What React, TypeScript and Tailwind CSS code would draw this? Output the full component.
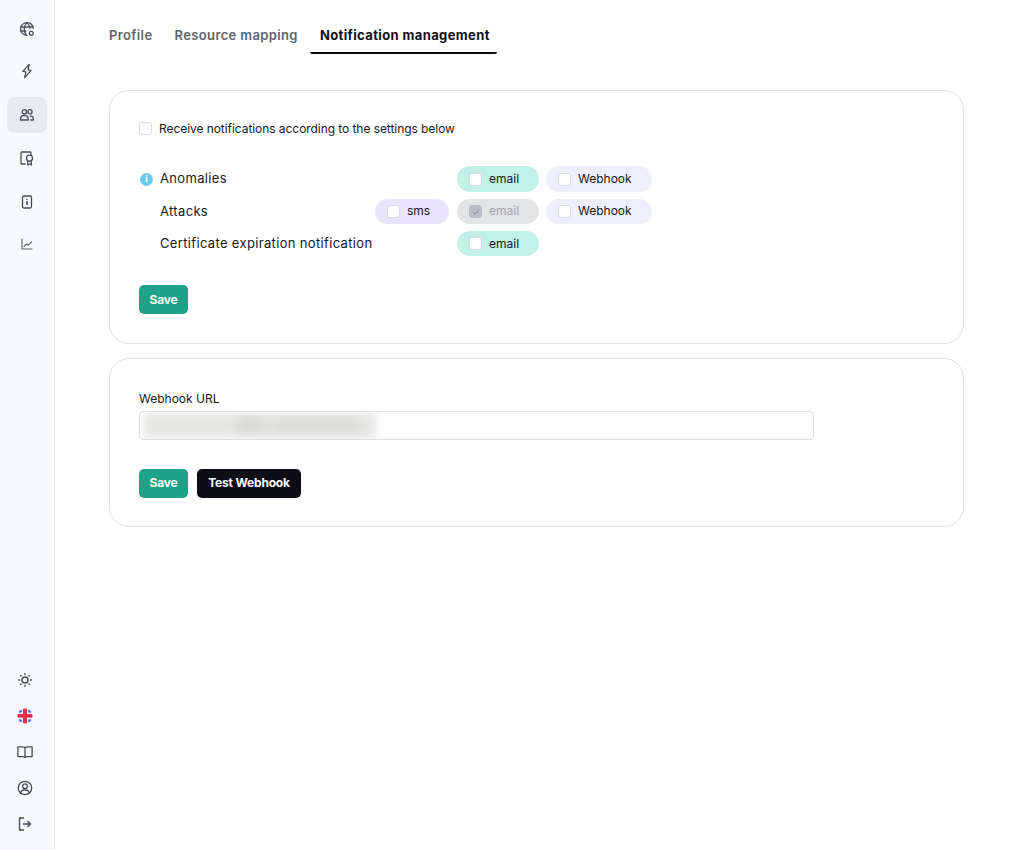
import React from "react";

const S = ({ children, w = 16 }: { children: React.ReactNode; w?: number }) => (
  <svg width={w} height={w} viewBox="0 0 16 16" fill="none" stroke="#454c59" strokeWidth="1.3" strokeLinecap="round" strokeLinejoin="round">
    {children}
  </svg>
);

const GlobeDot = () => (
  <S>
    <path d="M14.3 7.2A6.4 6.4 0 1 0 7.6 14.4" />
    <path d="M1.6 6h12.2M1.7 10h5" />
    <path d="M7.9 1.6C6 3.4 5.2 5.6 5.2 8s.8 4.6 2.4 6.4M8 1.6c1.8 1.8 2.7 3.6 2.9 5.6" />
    <circle cx="12.3" cy="12.2" r="1.9" />
  </S>
);
const Bolt = () => (
  <S>
    <path d="M10.2 1.4 3.9 8.4l3 .5-1.2 5.7 6.4-7.2-3-.5z" />
  </S>
);
const People = () => (
  <S>
    <circle cx="5.4" cy="4.8" r="2.2" />
    <path d="M1.6 13v-1.3c0-1.7 1.4-3 3-3h1.6c1.7 0 3 1.3 3 3V13z" />
    <circle cx="11" cy="4.8" r="2.1" />
    <path d="M11.4 8.8c1.8.2 3 1.4 3 3.1V13h-2.6" />
  </S>
);
const CertIcon = () => (
  <S>
    <path d="M6 14H3a1 1 0 0 1-1-1V3a1 1 0 0 1 1-1h8a1 1 0 0 1 1 1v1.5" />
    <circle cx="10.5" cy="8.2" r="3" />
    <path d="M8.7 10.5V15l1.8-1 1.8 1v-4.5" />
  </S>
);
const InfoCard = () => (
  <S>
    <rect x="3.5" y="2" width="9" height="12" rx="1.5" />
    <path d="M8 5.5v.1M8 7.6v3" strokeWidth="1.5" />
  </S>
);
const Chart = () => (
  <svg width="12" height="12" viewBox="0 0 12 12" fill="none" stroke="#5b6270" strokeWidth="1.1" strokeLinecap="round" strokeLinejoin="round">
    <path d="M1 1v10h10" />
    <path d="M3 8.5 5.6 6l1.5 1.2L10.5 4" />
  </svg>
);
const SunDots = () => (
  <S>
    <circle cx="8" cy="8" r="3" strokeWidth="1.5" />
    <path d="M8 1.6v1M8 13.4v1M1.6 8h1M13.4 8h1M3.5 3.5l.6.6M11.9 11.9l.6.6M3.5 12.5l.6-.6M11.9 4.1l.6-.6" strokeWidth="1.4" />
  </S>
);
const Flag = () => (
  <svg width="16" height="16" viewBox="0 0 16 16">
    <defs>
      <clipPath id="flagclip"><circle cx="8" cy="8" r="7.6" /></clipPath>
    </defs>
    <g clipPath="url(#flagclip)">
      <rect width="16" height="16" fill="#f2f3fa" />
      <rect x="1.6" y="2" width="3" height="2.6" fill="#4a56c4" />
      <rect x="11.4" y="2" width="3" height="2.6" fill="#4a56c4" />
      <rect x="1.6" y="11.4" width="3" height="2.6" fill="#4a56c4" />
      <rect x="11.4" y="11.4" width="3" height="2.6" fill="#4a56c4" />
      <rect x="6" width="4" height="16" fill="#ee2a4c" />
      <rect y="6" width="16" height="3.6" fill="#ee2a4c" />
    </g>
  </svg>
);
const Book = () => (
  <S>
    <path d="M8 3.6C7.2 3 6.2 2.8 5 2.8H.9v9.8H5.5c1.100 0 1.900.2 2.500.8.600-.6 1.400-.8 2.500-.8h4.600V2.800H11c-1.200 0-2.200.2-3 .8z" />
    <path d="M8 3.6v9.8" />
  </S>
);
const UserCircle = () => (
  <S>
    <circle cx="8" cy="8" r="6.7" />
    <circle cx="8" cy="6.2" r="2.4" />
    <path d="M3.8 13c.3-1.900 1.800-3 3.200-3h2c1.400 0 2.900 1.100 3.200 3" />
  </S>
);
const Exit = () => (
  <S>
    <path d="M6.5 2H2.5v12h4" strokeWidth="1.4" />
    <path d="M6.5 8h7M11 5.500 13.500 8 11 10.500" strokeWidth="1.5" />
  </S>
);

function Side({ active, mt, children }: { active?: boolean; mt?: string; children: React.ReactNode }) {
  return (
    <div className={`w-10 h-9 flex items-center justify-center rounded-lg ${active ? "bg-[#e6ebf3]" : ""} ${mt ?? ""}`}>
      {children}
    </div>
  );
}

function Box({ checked }: { checked?: boolean }) {
  return (
    <span className={`w-[13px] h-[13px] rounded-[3px] border flex items-center justify-center shrink-0 ${checked ? "bg-[#b9bdc5] border-[#b9bdc5]" : "bg-white border-[#d9dbe3]"}`}>
      {checked && (
        <svg width="8" height="8" viewBox="0 0 8 8" fill="none" stroke="#7b808a" strokeWidth="1">
          <path d="M1 4l2 2 4-4.4" />
        </svg>
      )}
    </span>
  );
}

function Pill({ label, bg, w, disabled, h, lift }: { label: string; bg: string; w: string; disabled?: boolean; h: string; lift?: boolean }) {
  return (
    <div className={`flex items-center gap-[7px] pl-[12px] rounded-full text-[12px] ${bg} ${w} ${h} ${disabled ? "text-[#a3a6ad]" : "text-[#16181f]"}`}>
      <Box checked={disabled} />
      <span className={lift ? "-mt-[1px]" : ""}>{label}</span>
    </div>
  );
}

function Btn({ children, w, dark, pad }: { children: React.ReactNode; w: string; dark?: boolean; pad?: string }) {
  return (
    <button className={`h-[29px] rounded-[5px] text-white font-bold text-[12px] tracking-[-0.2px] ${w} ${pad ?? ""} ${dark ? "bg-[#0d0e15]" : "bg-[#1fa388]"}`}>
      {children}
    </button>
  );
}

export default function App() {
  return (
    <div className="flex min-h-[850px] w-[1010px] bg-white text-[#16181f] overflow-hidden font-['Inter','Liberation_Sans',sans-serif]">
      <aside className="w-[55px] h-[850px] shrink-0 bg-[#f7f9fe] border-r border-[#e6e9f2] flex flex-col items-center pt-[11px] pb-[8px]">
        <Side><GlobeDot /></Side>
        <Side mt="mt-[6px]"><Bolt /></Side>
        <Side active mt="mt-[8px]"><People /></Side>
        <Side mt="mt-[7px]"><CertIcon /></Side>
        <Side mt="mt-[8px]"><InfoCard /></Side>
        <Side mt="mt-[6px]"><Chart /></Side>
        <div className="flex-1" />
        <Side mt="pr-[4px]"><SunDots /></Side>
        <Side mt="pr-[4px]"><Flag /></Side>
        <Side mt="pr-[4px]"><Book /></Side>
        <Side mt="pr-[4px]"><UserCircle /></Side>
        <Side mt="pr-[4px]"><Exit /></Side>
      </aside>
      <main className="flex-1 pl-[54px] pr-[46px]">
        <nav className="flex gap-[2px] -ml-[10px] h-[54px] pt-[17px] text-[13px] font-semibold tracking-[0.38px]">
          <div className="px-[10px] h-[37px] pt-[10px] leading-[17px] text-[#5d6470]">Profile</div>
          <div className="px-[10px] h-[37px] pt-[10px] leading-[17px] text-[#5d6470]">Resource mapping</div>
          <div className="pl-[10px] pr-[7px] h-[37px] pt-[10px] leading-[17px] text-[#0d0e15] font-bold border-b-2 border-[#0d0e15] rounded-b-[2px]">Notification management</div>
        </nav>
        <section className="mt-[36px] h-[254px] rounded-[20px] border border-[#dfe1e8] pl-[29px] pt-[30px]">
          <label className="flex items-center gap-[7px] h-[14px] text-[12px] tracking-[-0.06px] text-[#16181f]">
            <Box />
            <span className="whitespace-nowrap mt-[2px]">Receive notifications according to the settings below</span>
          </label>
          <div className="mt-[31px] grid grid-cols-[229px_75px_82px_106px] gap-x-[7px] gap-y-[7px] w-max items-center">
            <div className="flex items-center text-[13px] tracking-[0.34px]">
              <span className="w-[13px] h-[13px] ml-[1px] mr-[7px] tracking-normal rounded-full bg-[#6dc8ee] text-white text-[9px] font-bold flex items-center justify-center">i</span>
              Anomalies
            </div>
            <div />
            <Pill label="email" bg="bg-[#c1f0e6]" w="w-[82px]" h="h-[26px]" />
            <Pill label="Webhook" bg="bg-[#edf0fc]" w="w-[106px]" h="h-[26px]" />

            <div className="pl-[21px] text-[13px] tracking-[0.34px]">Attacks</div>
            <Pill label="sms" bg="bg-[#e9e4fa]" w="w-[74px]" h="h-[25px]" lift />
            <Pill label="email" bg="bg-[#e3e4e6]" w="w-[82px]" h="h-[25px]" disabled lift />
            <Pill label="Webhook" bg="bg-[#edf0fc]" w="w-[106px]" h="h-[25px]" lift />

            <div className="pl-[21px] text-[13px] tracking-[0.34px] whitespace-nowrap">Certificate expiration notification</div>
            <div />
            <Pill label="email" bg="bg-[#c1f0e6]" w="w-[82px]" h="h-[25px]" />
          </div>
          <div className="mt-[29px]"><Btn w="w-[49px]" pad="pt-[1px]">Save</Btn></div>
        </section>
        <section className="mt-[14px] h-[169px] rounded-[20px] border border-[#dfe1e8] pl-[29px] pt-[32px]">
          <div className="text-[12px] leading-[15px] text-[#16181f]">Webhook URL</div>
          <div className="mt-[5px] w-[675px] h-[29px] rounded-[4px] border border-[#dcdee5] bg-white overflow-hidden relative">
            <div className="absolute left-[4px] top-[1px] w-[232px] h-[25px] bg-[#e5e5e3] blur-[5px]" />
            <div className="absolute left-[98px] top-[6px] w-[24px] h-[15px] bg-[#d8d8d6] blur-[5px]" />
            <div className="absolute left-[130px] top-[8px] w-[90px] h-[12px] bg-[#dcdcda] blur-[5px]" />
          </div>
          <div className="mt-[29px] flex gap-[9px]">
            <Btn w="w-[49px]" pad="pb-[1px]">Save</Btn>
            <Btn w="w-[104px]" dark pad="pb-[1px]">Test Webhook</Btn>
          </div>
        </section>
      </main>
    </div>
  );
}
